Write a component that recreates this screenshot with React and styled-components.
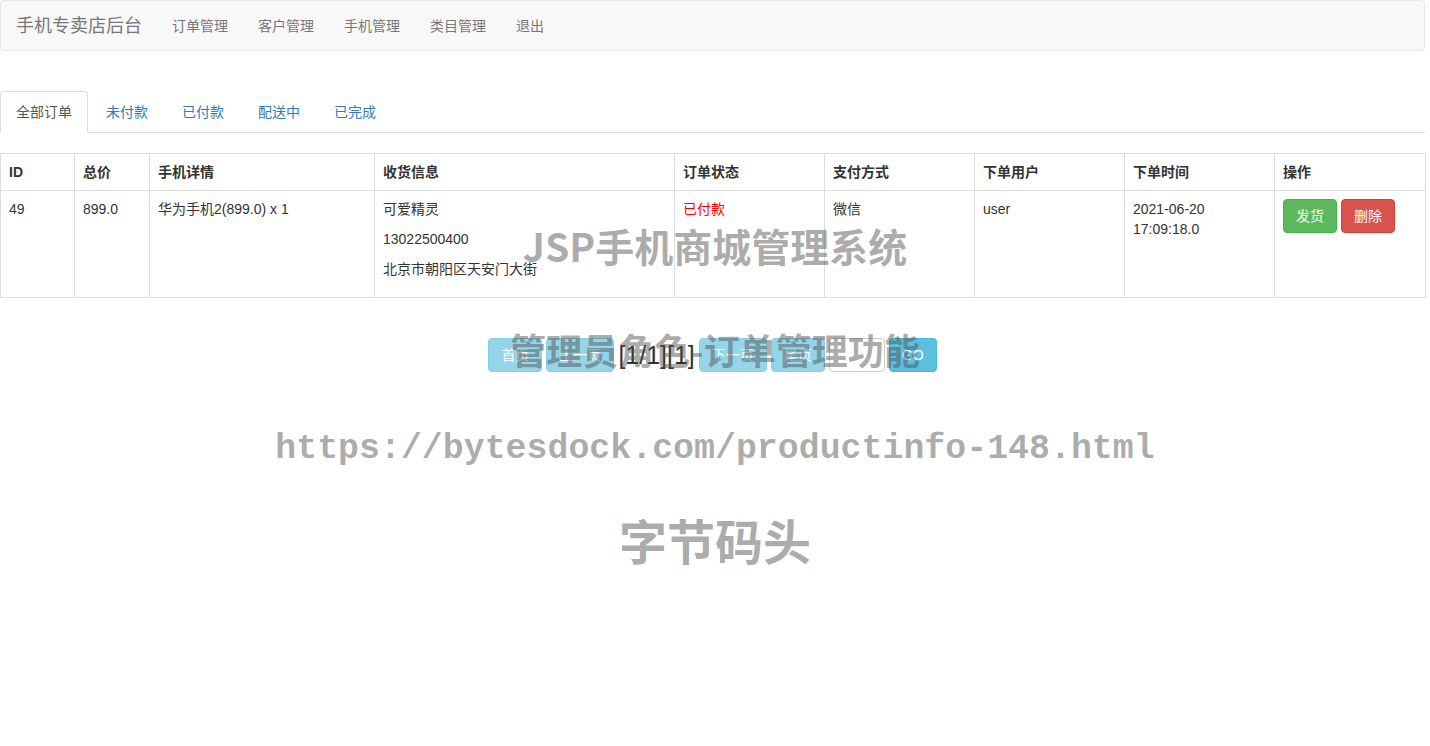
import React from "react";
import styled, { createGlobalStyle } from "styled-components";

const Global = createGlobalStyle`
  html, body { margin: 0; padding: 0; background: #fff; }
  body {
    font-family: "Liberation Sans", Arial, "Noto Sans CJK SC", sans-serif;
    font-size: 14px;
    line-height: 20px;
    color: #333;
  }
  * { box-sizing: border-box; }
`;

const Page = styled.div`
  position: relative;
  width: 1425px;
  min-height: 746px;
`;

const Navbar = styled.nav`
  display: flex;
  align-items: center;
  height: 51px;
  background: #f8f8f8;
  border: 1px solid #e7e7e7;
  border-radius: 4px;
`;

const Brand = styled.span`
  padding: 0 15px;
  font-size: 18px;
  line-height: 20px;
  color: #777;
`;

const NavLink = styled.a`
  padding: 15px 15px;
  color: #777;
  text-decoration: none;
  font-size: 14px;
  line-height: 20px;
`;

const Tabs = styled.ul`
  display: flex;
  list-style: none;
  margin: 40px 0 0;
  padding: 0;
  border-bottom: 1px solid #ddd;
`;

const Tab = styled.li`
  margin-bottom: -1px;
  margin-right: 2px;
  padding: 10px 15px;
  line-height: 20px;
  border: 1px solid ${(p) => (p.$active ? "#ddd" : "transparent")};
  border-bottom-color: ${(p) => (p.$active ? "#fff" : "transparent")};
  border-radius: 4px 4px 0 0;
  background: ${(p) => (p.$active ? "#fff" : "transparent")};
  color: ${(p) => (p.$active ? "#555" : "#337ab7")};
`;

const Table = styled.table`
  margin-top: 20px;
  width: 1425px;
  table-layout: fixed;
  border-collapse: collapse;
  border: 1px solid #ddd;
`;

const Th = styled.th`
  padding: 8px;
  text-align: left;
  font-weight: bold;
  line-height: 20px;
  border: 1px solid #ddd;
  vertical-align: bottom;
`;

const Td = styled.td`
  padding: 8px;
  line-height: 20px;
  border: 1px solid #ddd;
  vertical-align: top;
  color: ${(p) => p.$color || "#333"};
`;

const Para = styled.p`
  margin: 0 0 10px;
`;

const Btn = styled.button`
  display: inline-block;
  padding: 6px 12px;
  font-family: inherit;
  font-size: 14px;
  line-height: 20px;
  border-radius: 4px;
  border: 1px solid ${(p) => p.$border};
  background: ${(p) => p.$bg};
  color: #fff;
  cursor: pointer;
  opacity: ${(p) => (p.$disabled ? 0.65 : 1)};
`;

const Actions = styled.div`
  display: flex;
  gap: 4px;
`;

const Pager = styled.div`
  display: flex;
  justify-content: center;
  align-items: center;
  gap: 4px;
  margin-top: 40px;
`;

const PageInfo = styled.span`
  font-size: 25px;
  line-height: 34px;
  color: #333;
`;

const PageInput = styled.input`
  width: 56px;
  height: 34px;
  border: 1px solid #ccc;
  border-radius: 4px;
  padding: 6px 8px;
  font-size: 14px;
`;

const Watermark = styled.div`
  position: absolute;
  left: 0;
  width: 1430px;
  top: ${(p) => p.$top}px;
  text-align: center;
  font-family: ${(p) =>
    p.$mono ? '"Liberation Mono", "DejaVu Sans Mono", monospace' : '"Noto Sans CJK SC", sans-serif'};
  font-weight: bold;
  font-size: ${(p) => p.$size}px;
  line-height: 1;
  color: rgba(80, 80, 80, 0.48);
  pointer-events: none;
  white-space: nowrap;
`;

const cols = [74, 75, 225, 300, 150, 150, 150, 150, 151];
const heads = ["ID", "总价", "手机详情", "收货信息", "订单状态", "支付方式", "下单用户", "下单时间", "操作"];

export default function App() {
  return (
    <Page>
      <Global />
      <Navbar>
        <Brand>手机专卖店后台</Brand>
        <NavLink>订单管理</NavLink>
        <NavLink>客户管理</NavLink>
        <NavLink>手机管理</NavLink>
        <NavLink>类目管理</NavLink>
        <NavLink>退出</NavLink>
      </Navbar>
      <Tabs>
        <Tab $active>全部订单</Tab>
        <Tab>未付款</Tab>
        <Tab>已付款</Tab>
        <Tab>配送中</Tab>
        <Tab>已完成</Tab>
      </Tabs>
      <Table>
        <colgroup>
          {cols.map((w, i) => (
            <col key={i} style={{ width: w }} />
          ))}
        </colgroup>
        <thead>
          <tr>
            {heads.map((h) => (
              <Th key={h}>{h}</Th>
            ))}
          </tr>
        </thead>
        <tbody>
          <tr>
            <Td>49</Td>
            <Td>899.0</Td>
            <Td>华为手机2(899.0) x 1</Td>
            <Td>
              <Para>可爱精灵</Para>
              <Para>13022500400</Para>
              <Para>北京市朝阳区天安门大街</Para>
            </Td>
            <Td $color="#f00">已付款</Td>
            <Td>微信</Td>
            <Td>user</Td>
            <Td>
              2021-06-20
              <br />
              17:09:18.0
            </Td>
            <Td>
              <Actions>
                <Btn $bg="#5cb85c" $border="#4cae4c">发货</Btn>
                <Btn $bg="#d9534f" $border="#d43f3a">删除</Btn>
              </Actions>
            </Td>
          </tr>
        </tbody>
      </Table>
      <Pager>
        <Btn $bg="#5bc0de" $border="#46b8da" $disabled>首页</Btn>
        <Btn $bg="#5bc0de" $border="#46b8da" $disabled>上一页</Btn>
        <PageInfo>[1/1][1]</PageInfo>
        <Btn $bg="#5bc0de" $border="#46b8da" $disabled>下一页</Btn>
        <Btn $bg="#5bc0de" $border="#46b8da" $disabled>尾页</Btn>
        <PageInput />
        <Btn $bg="#5bc0de" $border="#46b8da">GO</Btn>
      </Pager>
      <Watermark $top={226} $size={39}>JSP手机商城管理系统</Watermark>
      <Watermark $top={331} $size={36}>管理员角色-订单管理功能</Watermark>
      <Watermark $top={432} $size={34.9} $mono>https://bytesdock.com/productinfo-148.html</Watermark>
      <Watermark $top={515} $size={48}>字节码头</Watermark>
    </Page>
  );
}
